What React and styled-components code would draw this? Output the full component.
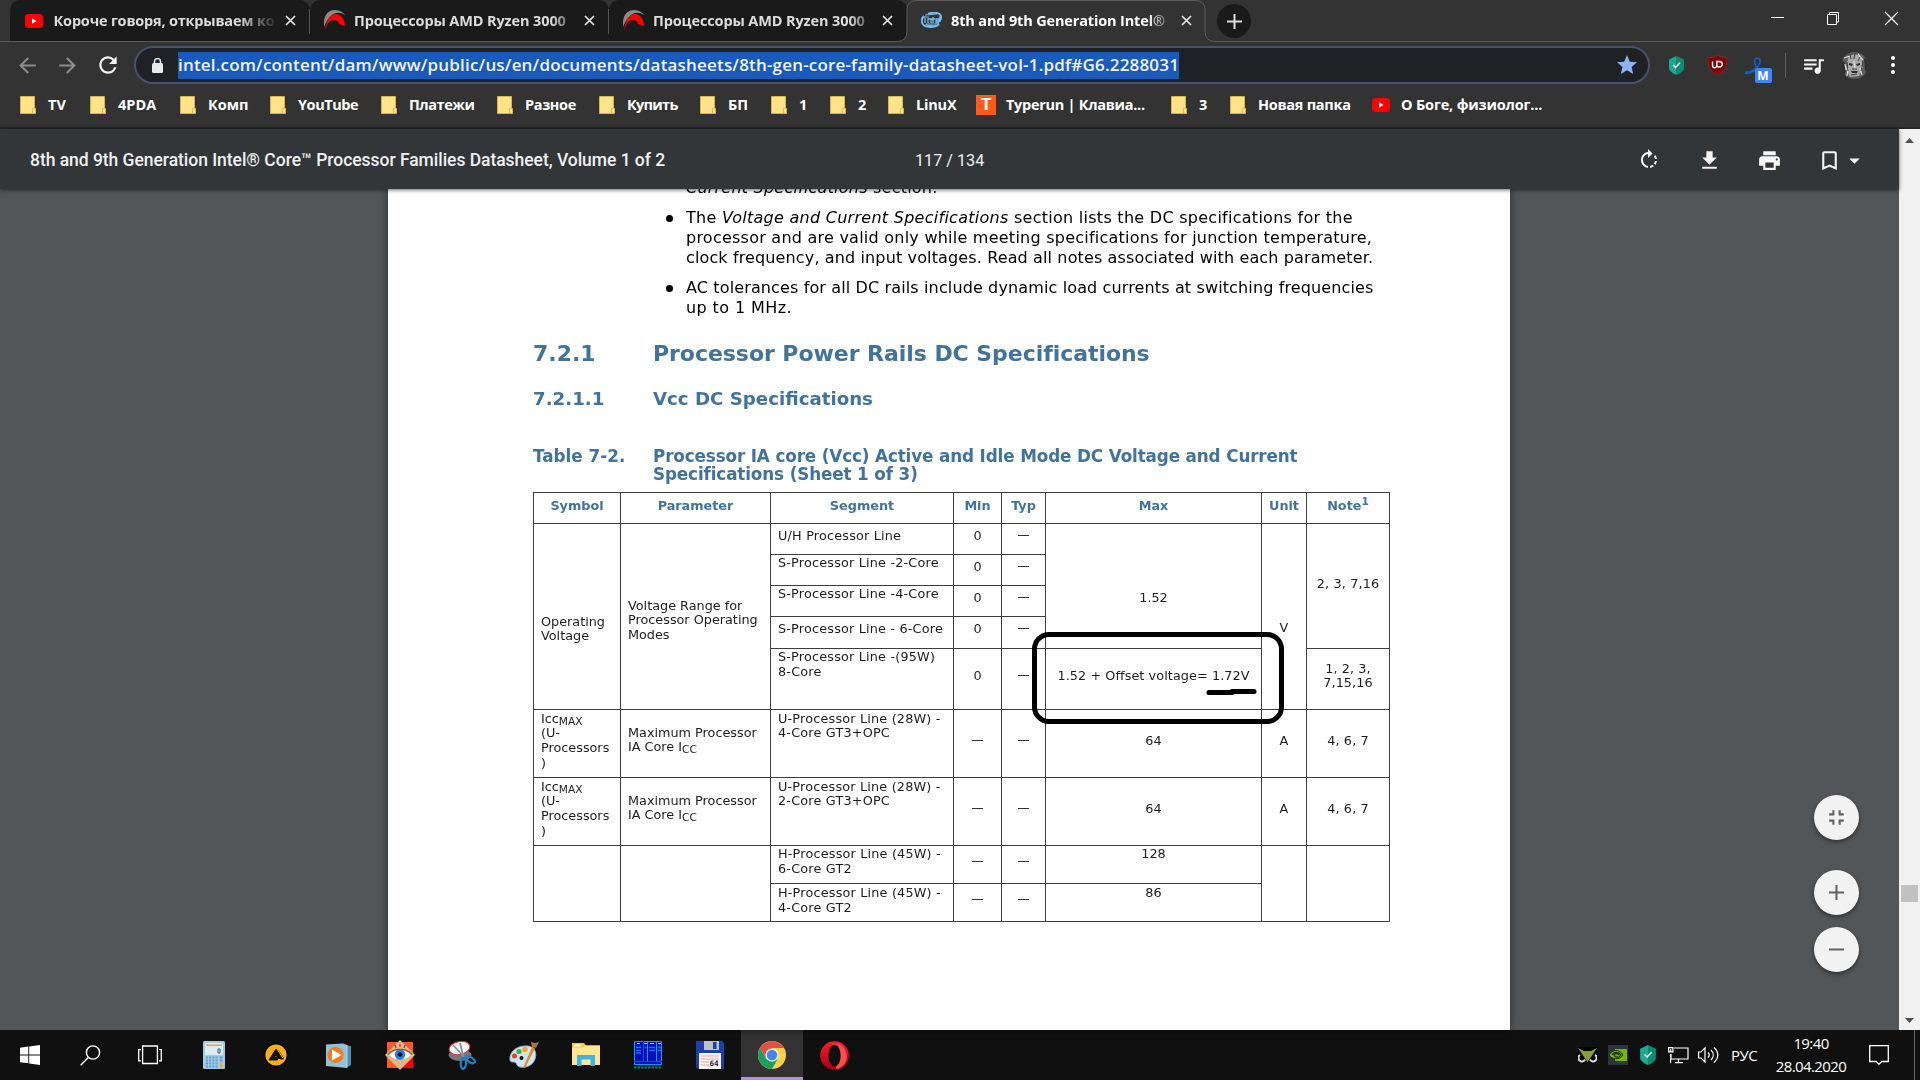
import React from 'react';
import styled, { createGlobalStyle } from 'styled-components';
import {
  MdArrowBack,
  MdArrowForward,
  MdRefresh,
  MdStar,
  MdQueueMusic,
  MdRotateRight,
  MdFileDownload,
  MdPrint,
  MdBookmarkBorder,
  MdArrowDropDown,
  MdFullscreenExit,
} from 'react-icons/md';

const GlobalStyle = createGlobalStyle`
  * { box-sizing: border-box; }
  body { margin: 0; overflow: hidden; background: #525659; }
  svg { display: block; flex: none; }
`;

const Screen = styled.div`
  width: 1920px;
  height: 1080px;
  display: flex;
  flex-direction: column;
  overflow: hidden;
  font-family: 'Open Sans', 'Noto Sans', sans-serif;
  color: #fff;
`;

/* ---------- tab strip ---------- */

const TabStrip = styled.div`
  height: 41px;
  display: flex;
  padding-left: 10px;
  background: #333;
`;

const Tab = styled.div`
  position: relative;
  width: ${p => p.$width || 299}px;
  height: 41px;
  padding: 0 14px;
  display: flex;
  align-items: center;
  color: ${p => (p.$active ? '#fff' : '#dcdcdc')};
  background: ${p => (p.$active ? 'transparent' : '#1a1a1a')};
  border-radius: 10px 10px 0 0;

  > * { position: relative; }
`;

const TabDivider = styled.i`
  && { position: absolute; }
  right: 0;
  top: 9px;
  width: 1px;
  height: 25px;
  background: #555;
`;

const TabShape = styled.svg`
  && { position: absolute; }
  left: -10px;
  top: 0;
`;

const TabIcon = styled.div`
  width: 21px;
  margin-right: 9px;
  display: flex;
  justify-content: center;
`;

const TabTitle = styled.div`
  flex: 1;
  height: 24px;
  white-space: nowrap;
  font-size: 14.5px;
  line-height: 23px;
  font-weight: 700;
  letter-spacing: ${p => p.$spacing || 0}px;
  mask-image: linear-gradient(90deg, #000 ${p => p.$fade || 90}%, transparent 102%);
`;

const TabClose = styled.div`
  width: 22px;
  display: flex;
  justify-content: flex-end;
`;

const NewTab = styled.div`
  width: 34px;
  height: 34px;
  margin: 4px 0 0 11px;
  border-radius: 50%;
  background: #1a1a1a;
  display: grid;
  place-items: center;
`;

const WindowControls = styled.div`
  margin-left: auto;
  display: flex;

  svg { width: 57px; height: 38px; }
`;

/* ---------- address bar ---------- */

const AddressRow = styled.div`
  height: 46px;
  border-top: 1px solid #5c5c5c;
  background: #333;
  display: flex;
  align-items: center;
  padding: 1px 0 0 7px;
`;

const Slot = styled.div`
  width: ${p => p.$w}px;
  display: flex;
  flex: none;
  align-items: center;
  justify-content: center;
  color: ${p => p.$color || '#f5f5f5'};
`;

const Omnibox = styled.div`
  flex: none;
  width: 1516px;
  height: 38px;
  margin-left: 6px;
  border: 2px solid #47536c;
  border-radius: 19px;
  background: #202124;
  display: flex;
  align-items: center;
  padding: 0 9px 0 16px;
  color: #8ab4f8;
`;

const Url = styled.div`
  width: 1001px;
  height: 27px;
  margin: 0 auto 0 15px;
  background: #195abc;
  color: #f1f4fa;
  font-size: 17px;
  font-weight: 600;
  line-height: 26px;
  letter-spacing: 0.18px;
  white-space: nowrap;
`;

const Divider = styled.div`
  width: 1px;
  height: 25px;
  background: #5f6368;
`;

const Badged = styled.div`
  position: relative;
  margin-top: 10px;
`;

const Badge = styled.span`
  position: absolute;
  left: 10px;
  top: 11px;
  width: 17px;
  height: 15px;
  border-radius: 2px;
  background: #4285f4;
  color: #fff;
  font-size: 12px;
  line-height: 15px;
  font-weight: 700;
  text-align: center;
`;

/* ---------- bookmarks ---------- */

const BookmarkBar = styled.div`
  height: 42px;
  padding: 0 20px 4px;
  background: #333;
  border-bottom: 2px solid #262626;
  display: flex;
  align-items: center;
`;

const Bookmark = styled.div`
  display: flex;
  align-items: center;
  flex: none;
  width: ${p => p.$w}px;
  gap: ${p => p.$gap || 12}px;
  font-size: 14.5px;
  font-weight: 700;
  line-height: 20px;
  letter-spacing: ${p => p.$spacing || 0}px;
  white-space: nowrap;
`;

/* ---------- pdf viewer ---------- */

const PdfBar = styled.div`
  position: relative;
  z-index: 2;
  height: 60px;
  display: flex;
  align-items: center;
  padding: 2px 14px 0 30px;
  background: #323639;
  color: #f1f1f1;
  box-shadow: 0 1px 4px rgba(0, 0, 0, 0.6);
  font-family: Roboto, sans-serif;
`;

const PdfTitle = styled.div`
  width: 885px;
  font-size: 17.5px;
  font-weight: 500;
  letter-spacing: -0.04px;
`;

const PageCount = styled.div`
  font-size: 16.2px;
`;

const PdfTools = styled.div`
  margin-left: auto;
  display: flex;
  align-items: center;
`;

const Viewer = styled.div`
  height: 901px;
  display: flex;
  background: #525659;
`;

const ViewerMain = styled.div`
  position: relative;
  width: 1899px;
`;

const ScrollTrack = styled.div`
  width: 21px;
  background: #f1f1f1;
  display: flex;
  flex-direction: column;
  align-items: center;
`;

const ScrollThumb = styled.div`
  width: 17px;
  height: 17px;
  margin: 739px 0 110px;
  background: #c1c1c1;
`;

const Fabs = styled.div`
  position: absolute;
  right: 40px;
  top: 666px;
  display: flex;
  flex-direction: column;
`;

const Fab = styled.div`
  width: 45px;
  height: 45px;
  margin-bottom: ${p => p.$after || 0}px;
  border-radius: 50%;
  background: #f2f2f2;
  color: #616161;
  box-shadow: 0 2px 4px rgba(0, 0, 0, 0.45);
  display: grid;
  place-items: center;
`;

/* ---------- document ---------- */

const Sheet = styled.div`
  position: relative;
  width: 1122px;
  height: 841px;
  margin-left: 388px;
  padding: 0 120px 0 145px;
  overflow: hidden;
  background: #fff;
  color: #000;
  font-family: 'DejaVu Sans', Verdana, sans-serif;
`;

const SheetFrame = styled.div`
  height: 841px;
  width: 1510px;
  filter: drop-shadow(0 0 4px rgba(0, 0, 0, 0.5));
`;

const Notes = styled.ul`
  list-style: none;
  margin: -10.8px 0 0;
  padding: 0 0 0 130px;
  font-size: 16px;
  line-height: 20.2px;
  white-space: nowrap;
`;

const Note = styled.li`
  display: flex;
  margin-bottom: 9.5px;
`;

const Line = styled.div`
  letter-spacing: ${p => p.$spacing || 0.13}px;
`;

const Bullet = styled.i`
  width: 7px;
  height: 7px;
  margin: 7px 13px 0 3px;
  border-radius: 50%;
  background: ${p => (p.$hidden ? 'transparent' : '#000')};
`;

const Heading = styled.div`
  display: grid;
  grid-template-columns: 120px 1fr;
  margin-top: ${p => p.$mt}px;
  font-size: ${p => p.$size}px;
  line-height: ${p => p.$lh}px;
  font-weight: 700;
  color: #41739f;
  white-space: nowrap;

  span + span { letter-spacing: ${p => p.$spacing || 0}px; }
`;

const SpecTable = styled.div`
  width: 857px;
  margin-top: 9px;
  display: grid;
  grid-template-columns: 87px 150px 183px 48px 44px 216px 45px 83px;
  grid-template-rows: 31px 31px 31px 31px 32px 61px 68px 68px 38px 38px;
  border-right: 1px solid #3c3c3c;
  border-bottom: 1px solid #3c3c3c;
  font-size: 12.8px;
  line-height: 14.7px;
  color: #1c1c1c;
`;

const Cell = styled.div`
  grid-column: ${p => p.$col};
  grid-row: ${p => p.$row} / span ${p => p.$span || 1};
  border-top: 1px solid #3c3c3c;
  border-left: 1px solid #3c3c3c;
  padding: ${p => p.$y}px 0 0 ${p => (p.$left ? 7 : 0)}px;
  text-align: ${p => (p.$left ? 'left' : 'center')};
  letter-spacing: ${p => p.$spacing || 0}px;
  white-space: pre-line;

  sub, sup { font-size: 10.6px; line-height: 0; }
  sub { vertical-align: -2px; }
`;

const HeadCell = styled(Cell)`
  font-weight: 700;
  color: #41739f;
`;

const Dash = styled.span`
  display: inline-block;
  width: 11px;
  height: 1px;
  vertical-align: 4px;
  background: #333;
`;

const Marker = styled.div`
  position: absolute;
  left: 644px;
  top: 443px;
  width: 252px;
  height: 92px;
  border: 5px solid #000;
  border-radius: 17px;
`;

const Underline = styled.svg`
  position: absolute;
  left: 818px;
  top: 499px;
`;

/* ---------- taskbar ---------- */

const Taskbar = styled.div`
  height: 50px;
  background: #101010;
  display: flex;
`;

const TaskButton = styled.div`
  width: ${p => p.$w || 62}px;
  margin-left: ${p => p.$ml || 0}px;
  display: flex;
  align-items: center;
  justify-content: center;
  background: ${p => (p.$active ? '#333' : 'transparent')};
  border-bottom: ${p => (p.$active ? '3px solid #b48fe0' : '0')};
  padding-top: ${p => (p.$active ? 3 : 0)}px;
`;

const Tray = styled.div`
  margin-left: auto;
  display: flex;
  align-items: center;
`;

const Lang = styled.div`
  width: 42px;
  text-align: center;
  font-size: 15px;
  letter-spacing: -0.5px;
`;

const Clock = styled.div`
  width: 92px;
  text-align: center;
  font-size: 15px;
  line-height: 23px;
  letter-spacing: -0.6px;
  padding-bottom: 1px;
`;

const DesktopEdge = styled.div`
  width: 6px;
  height: 50px;
  border-left: 1px solid #666;
`;

/* ---------- icons ---------- */

const YouTube = () => (
  <svg width="18" height="14" viewBox="0 0 18 14">
    <rect width="18" height="14" rx="3.5" fill="#f00" />
    <path d="M7 4.300v5.400l4.500-2.700z" fill="#fff" />
  </svg>
);

const Overclockers = () => (
  <svg width="21" height="21" viewBox="0 0 21 21">
    <path d="M0 17C-1 4 5 0 11 0c5 0 9 3 10 5-5-3-9-3-13 0-4 3-6 7-8 12z" fill="#8a8a8a" />
    <path d="M1 21C2 11 6 4 12 4c5 0 9 5 9 12l-6-2c-1-3-2-4-5-4-4 0-7 3-9 11z" fill="#f00" />
  </svg>
);

const IntelIcon = () => (
  <svg width="21" height="17" viewBox="0 0 21 17" fill="none" stroke="#78bdf0">
    <path d="M7 2C11 0 20 0 20 5c0 3-1 4-3 5M3 4C-1 8 0 15 9 15c4 0 7-1 9-3" strokeWidth="2" />
    <path d="M4 6v5M7 11V7h3v4M12 5v6M10 7h4M15 9h3V7h-3v4h3M19 4v6" strokeWidth="1.3" />
    <path d="M4 3l12-1M4 13l11 1M3 5h5M5 12h10" strokeWidth="1.200" />
  </svg>
);

const CloseX = () => (
  <svg width="11" height="11" viewBox="0 0 11 11" stroke="#e8e8e8" strokeWidth="1.7">
    <path d="M1 1l9 9M10 1l-9 9" />
  </svg>
);

const Lock = () => (
  <svg width="11" height="15" viewBox="0 0 11 15">
    <rect y="5" width="11" height="10" rx="1.5" fill="#e8eaed" />
    <path d="M2.5 6V3.6a3 3 0 0 1 6 0V6" fill="none" stroke="#e8eaed" strokeWidth="1.5" />
  </svg>
);

const Kaspersky = ({ w = 15, h = 19 }) => (
  <svg width={w} height={h} viewBox="0 0 15 19">
    <path d="M7.500 0L15 3.500v8.500c0 3-4 5.500-7.500 7z" fill="#0e8a72" />
    <path d="M7.500 0L0 3.500v8.500c0 3 4 5.500 7.500 7z" fill="#1aab91" />
    <path d="M4.300 9l2.300 2.400L11 6.800" fill="none" stroke="#fff" strokeWidth="1.400" />
  </svg>
);

const UBlock = () => (
  <svg width="19" height="20" viewBox="0 0 19 20">
    <path d="M9.500 0C12 2 15 2.500 19 2.500c0 9-1 13-9.500 17.500C1 15.500 0 11.500 0 2.500 4 2.500 7 2 9.500 0z" fill="#800006" stroke="#a33" strokeWidth=".6" />
    <path d="M4.500 6.500v4a2 2 0 0 0 4.400 0v-4M8.900 10V6.500h2c4.500 0 4.500 5.500 0 5.500-1 0-1.700-.6-2-1.500" fill="none" stroke="#fff" strokeWidth="1.400" />
  </svg>
);

const Lasso = () => (
  <svg width="27" height="27" viewBox="0 0 27 27" fill="none">
    <path d="M12 1c4 0 4 5 1 8l-4 5M12 1c-4 1-3 6 1 11l4 4" stroke="#0f5fc4" strokeWidth="1.700" />
    <path d="M0 14c4 1 7-1 10-3v3c-3 2-6 4-10 3z" fill="#0f5fc4" />
  </svg>
);

const Avatar = () => (
  <svg width="27" height="27" viewBox="0 0 27 27">
    <clipPath id="face"><circle cx="13.500" cy="13.500" r="13.500" /></clipPath>
    <g clipPath="url(#face)">
      <rect width="27" height="27" fill="#5c5c5c" />
      <path d="M7 6c4-5 10-5 13 0l2 9-4 9-9 1-4-8z" fill="#aaa" />
      <path d="M8 11l4 1-1 2-3-1zM15 12l4-1v2l-3 1zM10 19l7 0-1 2-5 0zM0 6l5 7-1 9-4 2zM23 6l4 2v15l-3-5z" fill="#2e2e2e" />
      <path d="M13 9l1 8M3 6l6-2M17 2l5 6M7 16l-1 8M19 16l2 7M4 12l1 6" stroke="#e2e2e2" strokeWidth="1.200" fill="none" />
      <path d="M9 2l1 5M14 1l-1 6M19 5l-2 4M6 10l1 9M11 17h5M22 10l-2 9M10 23l6-1" stroke="#3a3a3a" />
    </g>
  </svg>
);

const Dots = () => (
  <svg width="4" height="20" viewBox="0 0 4 20" fill="#fff">
    <circle cx="2" cy="3" r="2" /><circle cx="2" cy="10" r="2" /><circle cx="2" cy="17" r="2" />
  </svg>
);

const Folder = () => (
  <svg width="16" height="18" viewBox="0 0 16 18">
    <path d="M.5.500h14V12l1 .500v5H.500z" fill="#ffe38b" stroke="#d8b545" />
    <path d="M12.500 17v-4.500l2-.5" fill="none" stroke="#e0b93c" />
  </svg>
);

const TyperunBox = styled.div`
  width: 20px;
  height: 20px;
  background: #ff5a1a;
  font: 700 18px/20px 'Liberation Mono', monospace;
  text-align: center;
`;

const Windows = () => (
  <svg width="20" height="20" viewBox="0 0 20 20" fill="#fff">
    <path d="M0 2.800l8.300-1.200V9.500H0zM9.200 1.500L20 0v9.500H9.200zM0 10.400h8.300v7.900L0 17.200zM9.200 10.400H20V20L9.200 18.500z" />
  </svg>
);

const SearchIcon = () => (
  <svg width="21" height="21" viewBox="0 0 21 21" fill="none" stroke="#fff" strokeWidth="1.400">
    <circle cx="13" cy="7.500" r="6.600" /><path d="M8.300 12.500L.700 20.300" />
  </svg>
);

const TaskView = () => (
  <svg width="24" height="20" viewBox="0 0 24 20" fill="none" stroke="#fff" strokeWidth="1.300">
    <path d="M4.600 1h14.800v17.500H4.600zM3 4.600H.700v11.300H3M21 4.600h2.300v11.300H21" />
  </svg>
);

const Calculator = () => (
  <svg width="22" height="28" viewBox="0 0 22 28">
    <rect width="22" height="28" rx="1.500" fill="#a5cbe3" />
    <rect x="2" y="2" width="18" height="12" fill="#dcecf6" />
    <path d="M3 3.500h16v1.500H3z" fill="#f5a623" />
    <path d="M15 8h2v4h-2z" fill="none" stroke="#456" />
    <path d="M3 16.500h12M3 19.500h12M3 22.500h12M3 25.500h12" stroke="#5f9fd0" strokeWidth="1.800" strokeDasharray="2 1.200" />
    <path d="M17 21.500h2.500v5H17z" fill="#f5a623" />
    <path d="M16.500 16.500h3M16.500 19.500h3" stroke="#5f9fd0" strokeWidth="1.800" />
  </svg>
);

const Aimp = () => (
  <svg width="26" height="26" viewBox="0 0 26 26">
    <circle cx="13" cy="13" r="12.500" fill="#0a0a0a" />
    <circle cx="13" cy="13" r="10.600" fill="#fcb017" />
    <path d="M13 4.500l8 12.500c-2 1-4 .500-5.500-1H21l-8-11.500z" fill="#111" />
    <path d="M13 7l6 9.500h-4L13 13l-1.500 2.500h3v2.500H6z" fill="#111" stroke="#111" />
  </svg>
);

const MediaPlayer = () => (
  <svg width="25" height="25" viewBox="0 0 25 25">
    <path d="M6 1l19 2v19l-5 3z" fill="#4c8fae" />
    <path d="M0 1.500l17-1L21 2v23L0 23z" fill="#8fc3da" />
    <path d="M21 2v23" stroke="#c5e4f2" strokeWidth=".8" />
    <circle cx="9.500" cy="12" r="8" fill="#f47b20" />
    <path d="M6 6.500v11l9.500-5.500z" fill="#fff" />
  </svg>
);

const FastStone = () => (
  <svg width="30" height="30" viewBox="0 0 30 30">
    <path d="M2 2h26v26H2z" fill="#fa5a28" />
    <path d="M16 15h12v13H15z" fill="#f00" />
    <path d="M15 0l15 15-15 15L0 15z" fill="#e3b582" />
    <path d="M4 15c6-6 16-6 22 0-6 6-16 6-22 0z" fill="#fff" />
    <circle cx="15" cy="14.500" r="5.200" fill="#1684f2" />
    <circle cx="15" cy="14.500" r="2.300" fill="#000" />
    <path d="M3 14.500c6-7 18-7 24 0M10 5l1 3M15 4v3M20 5l-1 3" fill="none" stroke="#7b5230" strokeWidth="1.200" />
  </svg>
);

const Snipping = () => (
  <svg width="28" height="29" viewBox="0 0 28 29">
    <ellipse cx="12" cy="14" rx="11.500" ry="6" fill="#777" />
    <ellipse cx="11.500" cy="7" rx="10.500" ry="6.500" fill="#f4f4f4" stroke="#c93a3a" transform="rotate(-12 11.500 7)" />
    <path d="M5 4l13 14M12 2l4 16" stroke="#8b8f94" strokeWidth="1.800" />
    <path d="M15 17c-3 2-3 10 0 11 3-1 4-7 2-11zM18 16c3-2 9 2 9 5-2 3-8 0-9-5z" fill="none" stroke="#1c83c4" strokeWidth="2.200" />
  </svg>
);

const Paint = () => (
  <svg width="30" height="28" viewBox="0 0 30 28">
    <path d="M1 19C0 10 9 4 19 5c7 1 9 7 7 13-2 6-8 9-15 8-4-1-3-5-6-5-2 0-4 0-4-2z" fill="#cfe3f0" stroke="#8eb2ca" />
    <circle cx="5.500" cy="15" r="2.500" fill="#e5412f" /><circle cx="10" cy="10.500" r="2.600" fill="#43b049" />
    <circle cx="16" cy="8.500" r="2.700" fill="#f9a81c" /><circle cx="12.500" cy="17" r="2" fill="#101010" />
    <path d="M14 27L23 6l3 1-10 20z" fill="#e08a2c" />
    <path d="M22 1l4 1 4-1-3 6-4-1z" fill="#a2754b" />
  </svg>
);

const Explorer = () => (
  <svg width="28" height="24" viewBox="0 0 28 24">
    <path d="M0 0h12l2 2.500h14V22H0z" fill="#f9c83c" />
    <path d="M0 4.500h11l2-2h15V22H0z" fill="#ffe694" />
    <path d="M2 1.500h7v2H2z" fill="#fff" />
    <path d="M5 12h18v11h-4.500v-6.500h-9V23H5z" fill="#3cb4e7" />
  </svg>
);

const Cabinet = () => (
  <svg width="28" height="28" viewBox="0 0 28 28">
    <path d="M0 0h28v24H0z" fill="#0010b4" />
    <path d="M.500.500h27v23H.500zM13.500 0v20M22.500 0v20" fill="none" stroke="#0aa0f0" />
    <path d="M0 20.500h28M9.500 0v20" fill="none" stroke="#0a50e0" />
    <path d="M2 6.500h5M2 9.500h5M2 12h5M10.500 6.500h2M15 6.500h6M15 9.500h6M24 6.500h3M24 9.500h3" stroke="#1a6cff" strokeWidth="1.600" />
    <path d="M3 2.500h3M10 2.500h3M16 2.500h4M24 2.500h3" stroke="#ffe100" />
    <path d="M0 26.500h28" stroke="#008080" strokeWidth="2" strokeDasharray="2.500 1" />
  </svg>
);

const Floppy = () => (
  <svg width="28" height="28" viewBox="0 0 28 28">
    <path d="M0 0h26l2 2v26H2l-2-2z" fill="#1c3fae" />
    <path d="M8 0h15v9H8z" fill="#bfc3c8" /><path d="M17 1h3.500v7H17z" fill="#1c3fae" />
    <path d="M3 12h22v16H3z" fill="#fbf4f2" />
    <path d="M5 15h18M5 18h18M5 21h8M5 24h8" stroke="#e9aaa8" />
    <text x="13.500" y="25" fontFamily="DejaVu Sans Mono, monospace" fontSize="7.500" fontWeight="700" fill="#222">64</text>
  </svg>
);

const Chrome = () => (
  <svg width="28" height="28" viewBox="0 0 28 28">
    <circle cx="14" cy="14" r="14" fill="#ffd04b" />
    <path d="M14 7h12.100a14 14 0 0 0-24.200 0L8 17.500z" fill="#de5246" />
    <path d="M1.900 7A14 14 0 0 0 14 28l6-10.500-6 3-6-3z" fill="#1a9f5c" />
    <circle cx="14" cy="14" r="6.600" fill="#f1f1f1" /><circle cx="14" cy="14" r="5.200" fill="#4285f4" />
  </svg>
);

const Opera = () => (
  <svg width="29" height="29" viewBox="0 0 29 29">
    <defs>
      <linearGradient id="op" x1="0" y1="0" x2="0" y2="1"><stop offset="0" stopColor="#ff1b2d" /><stop offset="1" stopColor="#a70014" /></linearGradient>
    </defs>
    <circle cx="14.500" cy="14.500" r="14.300" fill="url(#op)" />
    <path d="M12 3c12-5 22 16 8 24C8 32 28 14 12 3z" fill="#ff4b4b" />
    <ellipse cx="14.500" cy="14.500" rx="6.200" ry="11" fill="#101010" />
  </svg>
);

const Owl = () => (
  <svg width="19" height="16" viewBox="0 0 19 16">
    <path d="M0 0h19v16H0z" fill="#050505" />
    <path d="M2 8a3.500 3.500 0 1 0 5 4.500M17 8a3.500 3.500 0 1 1-5 4.500" fill="none" stroke="#ddd" strokeWidth="2" />
    <path d="M0 1l6 3h7l6-3-6 9-3.500 5L6 10z" fill="#8a9e36" />
  </svg>
);

const Nvidia = () => (
  <svg width="20" height="20" viewBox="0 0 20 20">
    <path d="M0 0h20v20H0z" fill="#2b3440" /><path d="M7 4h12v12H7z" fill="#76b900" />
    <path d="M1 10c3-6 11-6 14 0-3 5-11 5-14 0z" fill="#76b900" stroke="#26380a" />
    <path d="M4 10c2-4 7-3 9 0-2 3-6 3-7 0 1-2 3-2 5 0" fill="none" stroke="#26380a" strokeWidth="1.300" />
  </svg>
);

const Network = () => (
  <svg width="21" height="17" viewBox="0 0 21 17" fill="none" stroke="#fff" strokeWidth="1.200">
    <path d="M6 1h14v11H3V7M10.500 12v3.500M7 15.700h8M2.600 7v9" /><path d="M.600.600h4.300v4.300H.600zM2.700 2v3.500" />
  </svg>
);

const Speaker = () => (
  <svg width="21" height="18" viewBox="0 0 21 18" fill="none" stroke="#fff" strokeWidth="1.200">
    <path d="M.600 6H3l4-4v14l-4-4H.600zM10 6.500c1.500 1.500 1.500 3.500 0 5M13 4c3 3 3 7 0 10M16 1.500c5 4.500 5 10.500 0 15" />
  </svg>
);

const Notification = () => (
  <svg width="20" height="20" viewBox="0 0 20 20" fill="none" stroke="#fff" strokeWidth="1.300">
    <path d="M.700.700h18.600v15.800h-6.500L10 19.200l-2.800-2.700H.700z" />
  </svg>
);

/* ---------- data ---------- */

const bookmarks = [
  { text: 'TV', w: 70 },
  { text: '4PDA', w: 90 },
  { text: 'Комп', w: 90 },
  { text: 'YouTube', w: 111, spacing: -0.45 },
  { text: 'Платежи', w: 116, spacing: -0.45 },
  { text: 'Разное', w: 102, spacing: -0.35 },
  { text: 'Купить', w: 101, spacing: -0.7 },
  { text: 'БП', w: 71 },
  { text: '1', w: 59 },
  { text: '2', w: 58 },
  { text: 'LinuX', w: 88, spacing: -0.2 },
  { text: 'Typerun | Клавиа...', w: 195, icon: <TyperunBox>T</TyperunBox>, gap: 10, spacing: -0.28 },
  { text: '3', w: 59 },
  { text: 'Новая папка', w: 142, spacing: -0.28 },
  { text: 'О Боге, физиолог...', w: 180, icon: <YouTube />, gap: 11, spacing: -0.16 },
];

const heads = ['Symbol', 'Parameter', 'Segment', 'Min', 'Typ', 'Max', 'Unit'];

const segments = [
  { row: 2, y: 5.5, text: 'U/H Processor Line', min: '0', vy: 5.5 },
  { row: 3, y: 1.5, text: 'S-Processor Line -2-Core', min: '0', vy: 5.5 },
  { row: 4, y: 1.5, text: 'S-Processor Line -4-Core', min: '0', vy: 5.5 },
  { row: 5, y: 5.5, text: 'S-Processor Line - 6-Core', min: '0', vy: 5.5 },
  { row: 6, y: 1.5, text: 'S-Processor Line -(95W)\n8-Core', min: '0', vy: 20.5 },
  { row: 7, y: 2, text: 'U-Processor Line (28W) -\n4-Core GT3+OPC', vy: 24 },
  { row: 8, y: 2, text: 'U-Processor Line (28W) -\n2-Core GT3+OPC', vy: 24 },
  { row: 9, y: 1.5, text: 'H-Processor Line (45W) -\n6-Core GT2', vy: 9 },
  { row: 10, y: 2.5, text: 'H-Processor Line (45W) -\n4-Core GT2', vy: 9 },
];

const maxValues = [
  { row: 2, span: 4, y: 67.5, text: '1.52' },
  { row: 6, y: 20.5, text: '1.52 + Offset voltage= 1.72V', spacing: 0.08 },
  { row: 7, y: 24, text: '64' },
  { row: 8, y: 24, text: '64' },
  { row: 9, y: 1.5, text: '128' },
  { row: 10, y: 2.5, text: '86' },
];

const BrowserTab = ({ icon, title, active, width, spacing, fade, divider }) => (
  <Tab $active={active} $width={width}>
    {active && (
      <TabShape width="318" height="43" viewBox="0 0 318 43">
        <path d="M0 41.500Q10 41.500 10 31V10Q10 .500 20 .500H298Q308 .500 308 10V31Q308 41.500 318 41.500V43H0z" fill="#333" />
        <path d="M0 41.500Q10 41.500 10 31V10Q10 .500 20 .500H298Q308 .500 308 10V31Q308 41.500 318 41.500" fill="none" stroke="#5c5c5c" />
      </TabShape>
    )}
    <TabIcon>{icon}</TabIcon>
    <TabTitle $spacing={spacing} $fade={fade}>{title}</TabTitle>
    <TabClose><CloseX /></TabClose>
    {divider && <TabDivider />}
  </Tab>
);

const Table = () => (
  <SpecTable>
    {heads.map((h, i) => <HeadCell key={h} $row={1} $col={i + 1} $y={6}>{h}</HeadCell>)}
    <HeadCell $row={1} $col={8} $y={6}>Note<sup>1</sup></HeadCell>

    <Cell $left $row={2} $span={5} $col={1} $y={91}>{'Operating\nVoltage'}</Cell>
    <Cell $left $row={2} $span={5} $col={2} $y={75}>{'Voltage Range for\nProcessor Operating\nModes'}</Cell>
    {[7, 8].map(row => (
      <React.Fragment key={row}>
        <Cell $left $row={row} $col={1} $y={2}>Icc<sub>MAX</sub>{'\n(U-\nProcessors\n)'}</Cell>
        <Cell $left $row={row} $col={2} $y={16}>{'Maximum Processor\nIA Core I'}<sub>CC</sub></Cell>
        <Cell $row={row} $col={7} $y={24}>A</Cell>
        <Cell $row={row} $col={8} $y={24} $spacing={0.15}>4, 6, 7</Cell>
      </React.Fragment>
    ))}
    <Cell $row={9} $span={2} $col={1} />
    <Cell $row={9} $span={2} $col={2} />

    {segments.map(s => (
      <React.Fragment key={s.row}>
        <Cell $left $row={s.row} $col={3} $y={s.y} $spacing={0.19}>{s.text}</Cell>
        <Cell $row={s.row} $col={4} $y={s.vy}>{s.min || <Dash />}</Cell>
        <Cell $row={s.row} $col={5} $y={s.vy}><Dash /></Cell>
      </React.Fragment>
    ))}
    {maxValues.map(m => (
      <Cell key={m.row} $row={m.row} $span={m.span} $col={6} $y={m.y} $spacing={m.spacing}>{m.text}</Cell>
    ))}

    <Cell $row={2} $span={5} $col={7} $y={97.5}>V</Cell>
    <Cell $row={9} $span={2} $col={7} />
    <Cell $row={2} $span={4} $col={8} $y={53} $spacing={0.15}>2, 3, 7,16</Cell>
    <Cell $row={6} $col={8} $y={13} $spacing={0.1}>{'1, 2, 3,\n7,15,16'}</Cell>
    <Cell $row={9} $span={2} $col={8} />
  </SpecTable>
);

const App = () => (
  <>
    <GlobalStyle />
    <Screen>
      <TabStrip>
        <BrowserTab icon={<YouTube />} title="Короче говоря, открываем ко" width={300} spacing={-0.2} fade={84} divider />
        <BrowserTab icon={<Overclockers />} title="Процессоры AMD Ryzen 3000" spacing={-0.12} divider />
        <BrowserTab icon={<Overclockers />} title="Процессоры AMD Ryzen 3000" width={298} spacing={-0.12} />
        <BrowserTab icon={<IntelIcon />} title="8th and 9th Generation Intel®" spacing={-0.15} active />
        <NewTab>
          <svg width="15" height="15" viewBox="0 0 15 15" stroke="#e0e0e0" strokeWidth="2"><path d="M7.500 0v15M0 7.500h15" /></svg>
        </NewTab>
        <WindowControls>
          <svg viewBox="0 0 57 38" stroke="#fff"><path d="M22 17.500h13" /></svg>
          <svg viewBox="0 0 57 38" stroke="#fff" fill="none"><path d="M21.500 14.500h9v10h-9zM23.500 14v-1.500h9v9.500h-2" /></svg>
          <svg viewBox="0 0 57 38" stroke="#fff" strokeWidth="1.200"><path d="M22 12l13 13M35 12L22 25" /></svg>
        </WindowControls>
      </TabStrip>

      <AddressRow>
        <Slot $w={40} $color="#8b8b8b"><MdArrowBack size={25} /></Slot>
        <Slot $w={40} $color="#8b8b8b"><MdArrowForward size={25} /></Slot>
        <Slot $w={41}><MdRefresh size={26} /></Slot>
        <Omnibox>
          <Lock />
          <Url>intel.com/content/dam/www/public/us/en/documents/datasheets/8th-gen-core-family-datasheet-vol-1.pdf#G6.2288031</Url>
          <MdStar size={24} />
        </Omnibox>
        <Slot $w={53}><Kaspersky /></Slot>
        <Slot $w={28}><UBlock /></Slot>
        <Slot $w={54}><Badged><Lasso /><Badge>M</Badge></Badged></Slot>
        <Divider />
        <Slot $w={54}><MdQueueMusic size={25} /></Slot>
        <Slot $w={28}><Avatar /></Slot>
        <Slot $w={50}><Dots /></Slot>
      </AddressRow>

      <BookmarkBar>
        {bookmarks.map(b => (
          <Bookmark key={b.text} $w={b.w} $gap={b.gap} $spacing={b.spacing}>
            {b.icon || <Folder />}
            {b.text}
          </Bookmark>
        ))}
      </BookmarkBar>

      <Viewer>
        <ViewerMain>
          <PdfBar>
            <PdfTitle>8th and 9th Generation Intel® Core™ Processor Families Datasheet, Volume 1 of 2</PdfTitle>
            <PageCount>117 / 134</PageCount>
            <PdfTools>
              <Slot $w={60}><MdRotateRight size={24} /></Slot>
              <Slot $w={60}><MdFileDownload size={25} /></Slot>
              <Slot $w={60}><MdPrint size={25} /></Slot>
              <Slot $w={86}>
                <MdBookmarkBorder size={25} />
                <MdArrowDropDown size={25} />
              </Slot>
            </PdfTools>
          </PdfBar>

          <SheetFrame>
            <Sheet>
              <Notes>
                <Note><Bullet $hidden /><Line $spacing={0.22}><em>Current Specifications</em> section.</Line></Note>
                <Note>
                  <Bullet />
                  <div>
                    <Line $spacing={0.27}>The <em>Voltage and Current Specifications</em> section lists the DC specifications for the</Line>
                    <Line $spacing={0.24}>processor and are valid only while meeting specifications for junction temperature,</Line>
                    <Line>clock frequency, and input voltages. Read all notes associated with each parameter.</Line>
                  </div>
                </Note>
                <Note>
                  <Bullet />
                  <div>
                    <Line>AC tolerances for all DC rails include dynamic load currents at switching frequencies</Line>
                    <Line $spacing={0.4}>up to 1 MHz.</Line>
                  </div>
                </Note>
              </Notes>
              <Heading $mt={21.6} $size={22} $lh={28} $spacing={-0.05}><span>7.2.1</span><span>Processor Power Rails DC Specifications</span></Heading>
              <Heading $mt={18.5} $size={18.2} $lh={24}><span>7.2.1.1</span><span>Vcc DC Specifications</span></Heading>
              <Heading $mt={36} $size={16.8} $lh={18} $spacing={-0.13}>
                <span>Table 7-2.</span>
                <span>Processor IA core (Vcc) Active and Idle Mode DC Voltage and Current<br />Specifications (Sheet 1 of 3)</span>
              </Heading>
              <Table />
              <Marker />
              <Underline width="52" height="8" viewBox="0 0 52 8" fill="none" stroke="#000" strokeWidth="5" strokeLinecap="round">
                <path d="M3 4.500h23M26 3.500h22" />
              </Underline>
            </Sheet>
          </SheetFrame>

          <Fabs>
            <Fab $after={30}><MdFullscreenExit size={25} /></Fab>
            <Fab $after={12}>
              <svg width="15" height="15" viewBox="0 0 15 15" stroke="#616161" strokeWidth="2"><path d="M0 7.500h15M7.500 0v15" /></svg>
            </Fab>
            <Fab>
              <svg width="15" height="15" viewBox="0 0 15 15" stroke="#616161" strokeWidth="2"><path d="M0 7.500h15" /></svg>
            </Fab>
          </Fabs>
        </ViewerMain>

        <ScrollTrack>
          <svg width="17" height="17" viewBox="0 0 17 17"><path d="M4 14h9L8.500 9z" fill="#505050" /></svg>
          <ScrollThumb />
          <svg width="17" height="17" viewBox="0 0 17 17"><path d="M4 6h9l-4.500 5z" fill="#505050" /></svg>
        </ScrollTrack>
      </Viewer>

      <Taskbar>
        <TaskButton $w={60}><Windows /></TaskButton>
        <TaskButton $w={60}><SearchIcon /></TaskButton>
        <TaskButton $w={60}><TaskView /></TaskButton>
        <TaskButton $ml={3}><Calculator /></TaskButton>
        <TaskButton><Aimp /></TaskButton>
        <TaskButton><MediaPlayer /></TaskButton>
        <TaskButton><FastStone /></TaskButton>
        <TaskButton><Snipping /></TaskButton>
        <TaskButton><Paint /></TaskButton>
        <TaskButton><Explorer /></TaskButton>
        <TaskButton><Cabinet /></TaskButton>
        <TaskButton><Floppy /></TaskButton>
        <TaskButton $active><Chrome /></TaskButton>
        <TaskButton><Opera /></TaskButton>
        <Tray>
          <Slot $w={30}><Owl /></Slot>
          <Slot $w={31}><Nvidia /></Slot>
          <Slot $w={30}><Kaspersky w={16} h={20} /></Slot>
          <Slot $w={30}><Network /></Slot>
          <Slot $w={30}><Speaker /></Slot>
          <Lang>РУС</Lang>
          <Clock>19:40<br />28.04.2020</Clock>
          <Slot $w={44}><Notification /></Slot>
          <Slot $w={13} />
          <DesktopEdge />
        </Tray>
      </Taskbar>
    </Screen>
  </>
);

export default App;
